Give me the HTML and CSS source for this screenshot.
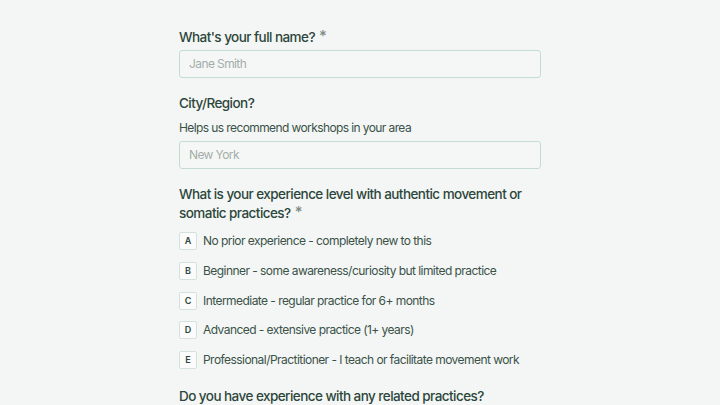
FILE: index.html
```html
<!DOCTYPE html>
<html>
<head>
<meta charset="utf-8">
<link rel="stylesheet" href="styles.css">
</head>
<body>
<div class="form">
  <div class="field">
    <label class="q">What's your full name? <span class="req">*</span></label>
    <div class="input">Jane Smith</div>
  </div>
  <div class="field">
    <label class="q">City/Region?</label>
    <p class="help">Helps us recommend workshops in your area</p>
    <div class="input">New York</div>
  </div>
  <div class="field">
    <label class="q">What is your experience level with authentic movement or somatic practices? <span class="req">*</span></label>
    <ul class="options">
      <li><span class="key">A</span>No prior experience - completely new to this</li>
      <li><span class="key">B</span>Beginner - some awareness/curiosity but limited practice</li>
      <li><span class="key">C</span>Intermediate - regular practice for 6+ months</li>
      <li><span class="key">D</span>Advanced - extensive practice (1+ years)</li>
      <li><span class="key">E</span>Professional/Practitioner - I teach or facilitate movement work</li>
    </ul>
  </div>
  <div class="field">
    <label class="q">Do you have experience with any related practices?</label>
  </div>
</div>
</body>
</html>
```
FILE: styles.css
```css
html, body {
  margin: 0;
  padding: 0;
  background: #f4f6f5;
  font-family: Inter, "Noto Sans", sans-serif;
  color: #2c463b;
}
.form {
  width: 362px;
  margin: 0 auto;
  padding-top: 28px;
  display: flex;
  flex-direction: column;
  gap: 16px;
}
.field {
  display: flex;
  flex-direction: column;
}
.q {
  display: block;
  font-size: 13.5px;
  letter-spacing: -0.55px;
  font-weight: 500;
  line-height: 19px;
  margin-bottom: 3px;
}
.req {
  color: #7d8c85;
  font-size: 15px;
  line-height: 0;
  margin-left: 1px;
  vertical-align: 1px;
}
.help {
  margin: 4px 0 5px;
  font-size: 12px;
  letter-spacing: -0.6px;
  line-height: 16px;
  color: #3a5248;
}
.input {
  height: 28px;
  box-sizing: border-box;
  border: 1px solid #c5ddd1;
  border-radius: 3px;
  background: #f5f7f6;
  padding: 0 9px;
  font-size: 12px;
  letter-spacing: -0.6px;
  line-height: 26px;
  color: #a3aea9;
}
.options {
  list-style: none;
  margin: 6px 0 2px;
  padding: 0;
  display: flex;
  flex-direction: column;
  gap: 11.8px;
}
.options li {
  display: flex;
  align-items: center;
  gap: 6px;
  font-size: 12px;
  letter-spacing: -0.55px;
  line-height: 18px;
  color: #3a5248;
  white-space: nowrap;
}
.key {
  flex: none;
  width: 18px;
  height: 18px;
  box-sizing: border-box;
  border: 1px solid #d3e3db;
  border-radius: 2px;
  background: #fafbfa;
  display: flex;
  align-items: center;
  justify-content: center;
  font-size: 9px;
  letter-spacing: 0;
  font-weight: 600;
  color: #2c463b;
}
```
